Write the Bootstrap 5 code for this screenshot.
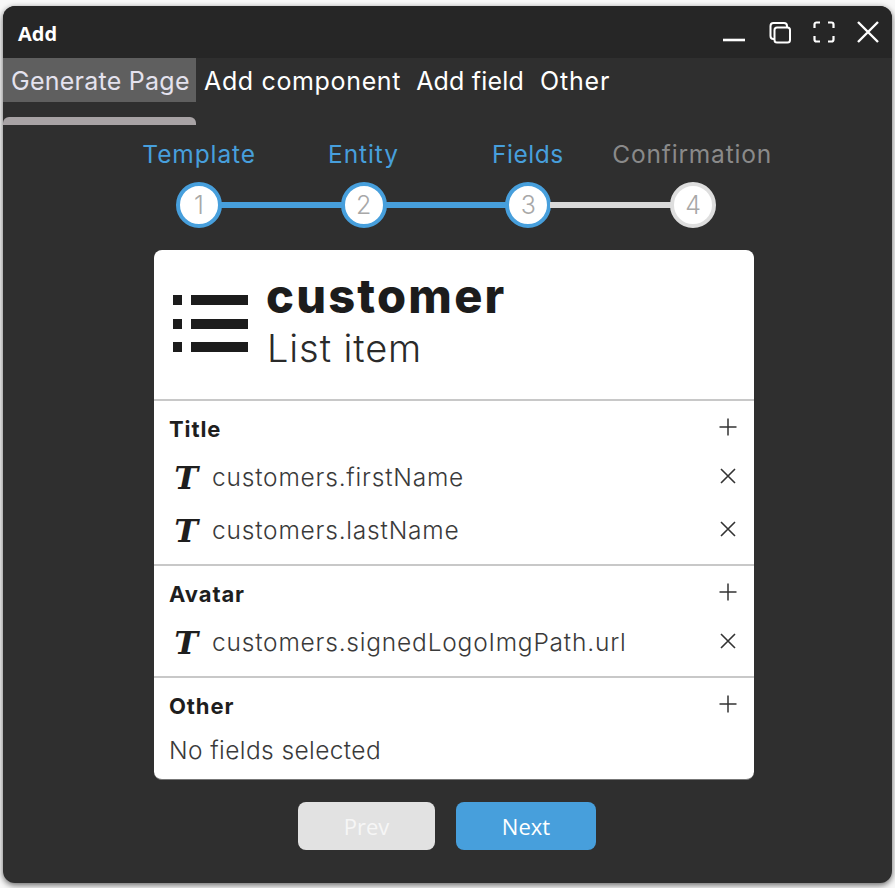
<!DOCTYPE html>
<html lang="en"><head><meta charset="utf-8"><title>Add</title>
<link href="https://cdn.jsdelivr.net/npm/bootstrap@5.3.0/dist/css/bootstrap.min.css" rel="stylesheet">
<style>
html,body{height:100%}
body{background:#f8f8f8;font-family:Inter,"Liberation Sans",sans-serif;overflow:hidden}
.win{position:relative;margin:6px 3px 0;width:889px;height:877px;background:#2f2f2f;border-radius:12px;box-shadow:0 2px 6px rgba(0,0,0,.6);color:#fff}
.titlebar{height:52px;background:#262626;border-radius:12px 12px 0 0;padding:0 11px 0 15px}
.ttl{font:700 20px "Open Sans",sans-serif;margin-top:2px}
.ctl{gap:18px}
.tabs{height:44px}
.tabx{font-size:25px;line-height:46px;height:44px;padding:0 8px;color:#fff;font-weight:400;white-space:nowrap}
.tabx.on{background:#5f5f5f;color:#e4e2ee;width:193px;letter-spacing:.25px}
.t2{letter-spacing:.65px;padding-right:7px}.t3{letter-spacing:.2px}.t4{letter-spacing:.8px}
.peek{width:193px;height:8px;background:#a8a3a5;border-radius:6px 6px 0 0;margin-top:15px}
.labels{display:grid;grid-template-columns:repeat(4,164.33px);width:657px;margin:7px 0 0 114px;height:39px}
.labels span{text-align:center;font-size:24.5px;line-height:44px;color:#479fdc;white-space:nowrap;letter-spacing:.9px}
.labels span.off{color:#8a8a8a;letter-spacing:.8px}
.labels span.fs{letter-spacing:.5px}
.track{margin:11px 0 0 173px;width:540px}
.dot{flex:none;width:46px;height:46px;border-radius:50%;background:#fff;border:4px solid #479fdc;color:#a8a8a8;font-size:25px;font-weight:300;line-height:38px;text-align:center}
.dot.off{border-color:#dedede}
.lnk{flex:1 1 0;height:6px;background:#479fdc;margin:-1px -1px 0}
.lnk.off{background:#d9d9d9}
.sheet{width:600px;height:530px;margin:22px 0 0 151px;background:#fff;border-radius:8px;color:#1e1e1e;border-bottom:1px solid #777}
.head{height:149px;padding:17px 0 0 18px;gap:18px}
.h1x{font-size:47px;font-weight:800;line-height:58px;letter-spacing:2.2px;color:#1c1c1c}
.h2x{font-size:38px;font-weight:300;line-height:40px;color:#2a2a2a;margin-top:3px;letter-spacing:.9px;margin-left:1px}
.sect{border-top:2px solid #c8c8c8;padding:0 16.5px 7px 15px}
.sect.lastx{padding-bottom:0}
.shead{height:50px;padding-top:6px}
.shead b{font-size:22px;font-weight:700;letter-spacing:.9px;color:#1e1e1e}
.shead svg{margin-bottom:4px}
.fld{font-size:24.5px;font-weight:300;color:#3a3a3a;letter-spacing:.8px;height:53px;padding-left:5px;gap:13px;white-space:nowrap}
.fld svg{margin-bottom:4px}
.tee{font:italic 700 32px/1 "DejaVu Serif",serif;color:#1e1e1e;width:25px;text-align:center}
.none{font-size:24.5px;font-weight:300;color:#3a3a3a;letter-spacing:.4px;line-height:44px}
.acts{margin-top:22px;gap:21px;padding-left:295px}
.bx{height:48px;border-radius:8px;font:400 22px "Open Sans",sans-serif;color:#fff;border:0;padding:0}
.bx.prev{width:137px;background:#e2e2e2;color:#f6f6f6}
.bx.next{width:140px;background:#479fdc}
</style></head><body>
<div class="win">
 <div class="titlebar d-flex align-items-center justify-content-between">
  <span class="ttl">Add</span>
  <div class="d-flex align-items-center ctl">
   <svg width="26" height="26" viewBox="0 0 26 26"><path d="M0 21h22" stroke="#fff" stroke-width="2.6"/></svg>
   <svg width="26" height="26" viewBox="0 0 26 26" fill="none" stroke="#fff" stroke-width="2"><rect x="7.500" y="8.500" width="15.500" height="15" rx="2.500"/><path d="M7.500 20H6.500A3 3 0 0 1 3.500 17V7a3 3 0 0 1 3-3h10.500A3 3 0 0 1 20 7V8.500"/></svg>
   <svg width="26" height="26" viewBox="0 0 26 26" fill="none" stroke="#fff" stroke-width="2.2"><path d="M9 3.500H5.500a2 2 0 0 0-2 2V9M17 3.500h3.500a2 2 0 0 1 2 2V9M9 22.500H5.500a2 2 0 0 1-2-2V17M17 22.500h3.500a2 2 0 0 0 2-2V17"/></svg>
   <svg width="26" height="26" viewBox="0 0 26 26" fill="none" stroke="#fff" stroke-width="2.4"><path d="M3 3l20 20M23 3L3 23"/></svg>
  </div>
 </div>
 <div class="d-flex tabs">
  <div class="tabx on">Generate Page</div><div class="tabx t2">Add component</div><div class="tabx t3">Add field</div><div class="tabx t4">Other</div>
 </div>
 <div class="peek"></div>
 <div class="labels"><span>Template</span><span>Entity</span><span class="fs">Fields</span><span class="off">Confirmation</span></div>
 <div class="track d-flex align-items-center">
  <div class="dot">1</div><div class="lnk"></div><div class="dot">2</div><div class="lnk"></div><div class="dot">3</div><div class="lnk off"></div><div class="dot off">4</div>
 </div>
 <div class="sheet">
  <div class="head d-flex">
   <svg width="76" height="61" viewBox="0 0 76 61" class="mt-4" fill="#1c1c1c"><path d="M1 4h9v10H1zM19 4h57v10H19zM1 28h9v10H1zM19 28h57v10H19zM1 51h9v10H1zM19 51h57v10H19z"/></svg>
   <div><div class="h1x">customer</div><div class="h2x">List item</div></div>
  </div>
  <div class="sect">
   <div class="shead d-flex justify-content-between align-items-center"><b>Title</b><svg width="20" height="20" viewBox="0 0 20 20"><path d="M10 1.500v17M1.500 10h17" stroke="#333" stroke-width="1.500"/></svg></div>
   <div class="fld d-flex align-items-center"><span class="tee">T</span><span class="flex-grow-1">customers.firstName</span><svg width="20" height="20" viewBox="0 0 20 20"><path d="M3 3l14 14M17 3L3 17" stroke="#333" stroke-width="1.600"/></svg></div>
   <div class="fld d-flex align-items-center"><span class="tee">T</span><span class="flex-grow-1">customers.lastName</span><svg width="20" height="20" viewBox="0 0 20 20"><path d="M3 3l14 14M17 3L3 17" stroke="#333" stroke-width="1.600"/></svg></div>
  </div>
  <div class="sect">
   <div class="shead d-flex justify-content-between align-items-center"><b>Avatar</b><svg width="20" height="20" viewBox="0 0 20 20"><path d="M10 1.500v17M1.500 10h17" stroke="#333" stroke-width="1.500"/></svg></div>
   <div class="fld d-flex align-items-center"><span class="tee">T</span><span class="flex-grow-1">customers.signedLogoImgPath.url</span><svg width="20" height="20" viewBox="0 0 20 20"><path d="M3 3l14 14M17 3L3 17" stroke="#333" stroke-width="1.600"/></svg></div>
  </div>
  <div class="sect lastx">
   <div class="shead d-flex justify-content-between align-items-center"><b>Other</b><svg width="20" height="20" viewBox="0 0 20 20"><path d="M10 1.500v17M1.500 10h17" stroke="#333" stroke-width="1.500"/></svg></div>
   <div class="none">No fields selected</div>
  </div>
 </div>
 <div class="d-flex acts"><button class="bx prev" type="button">Prev</button><button class="bx next" type="button">Next</button></div>
</div>
<script src="https://cdn.jsdelivr.net/npm/bootstrap@5.3.0/dist/js/bootstrap.bundle.min.js"></script>
</body></html>
